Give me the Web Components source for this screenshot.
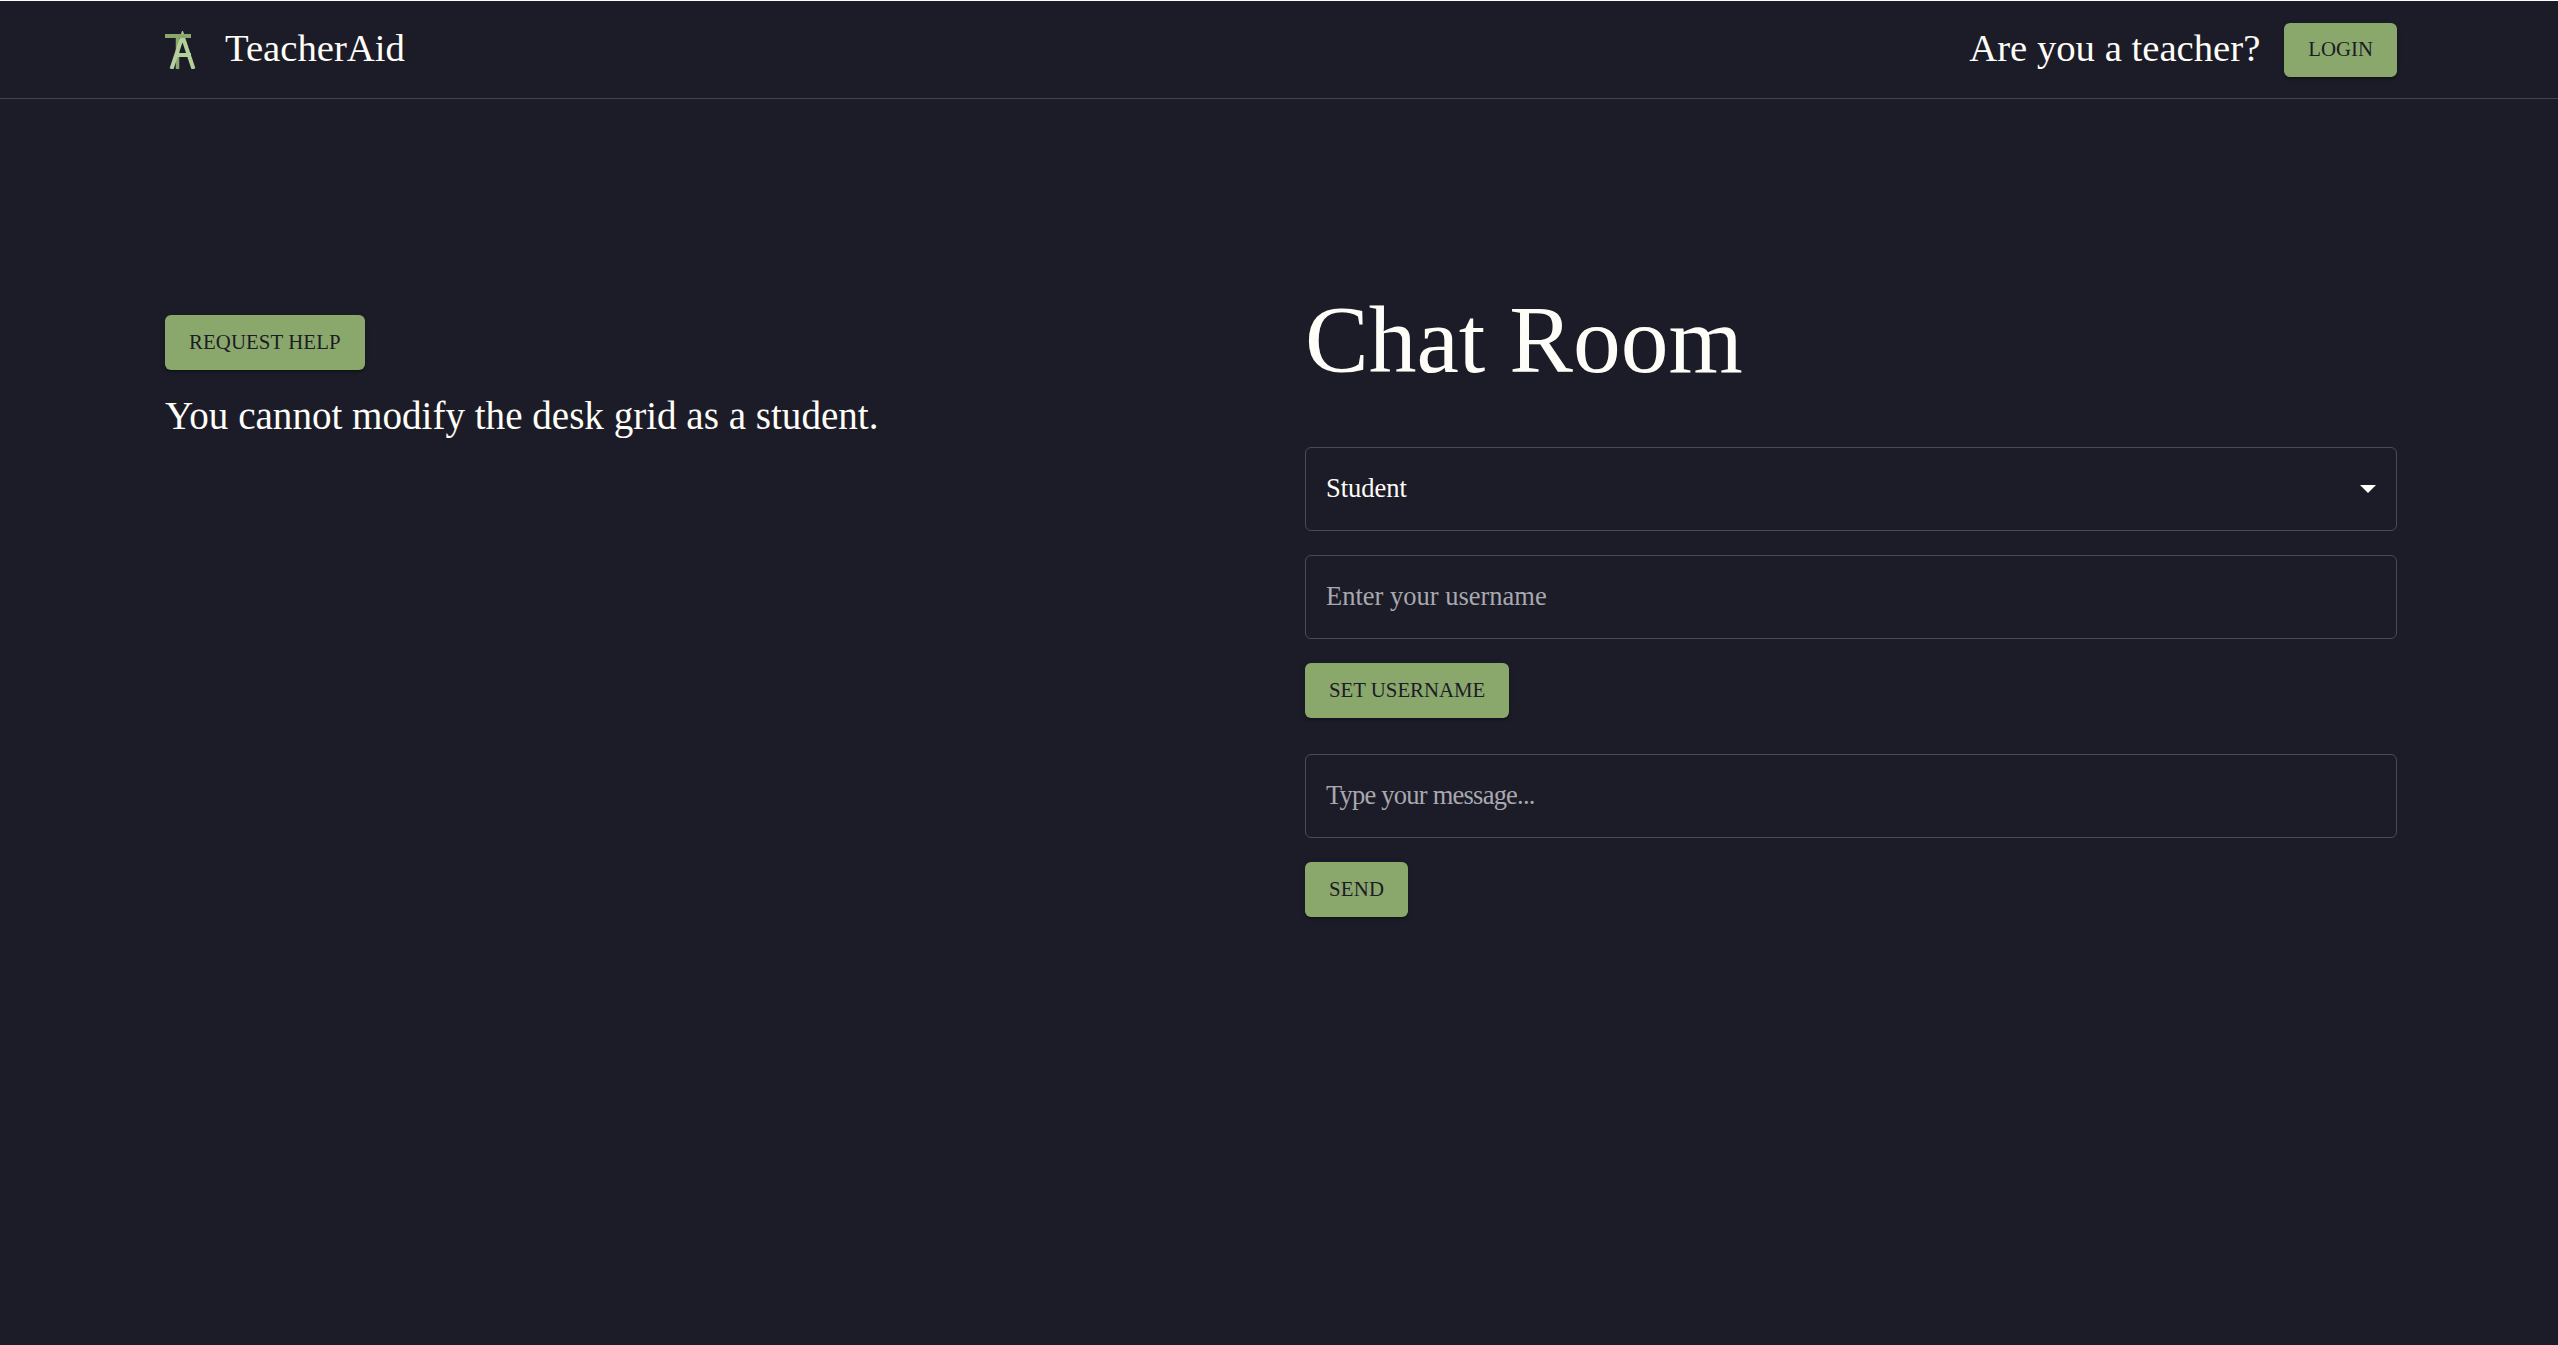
<!DOCTYPE html>
<html lang="en"><head><meta charset="utf-8"><title>TeacherAid</title>
<style>
html,body{margin:0;padding:0;background:#1c1c28;}
body{min-height:1345px;font-family:"Liberation Serif",serif;color:#fffdf7;}
</style></head><body>
<ta-header></ta-header>
<ta-main>
  <div slot="left">
    <ta-button style="letter-spacing:.1px">REQUEST HELP</ta-button>
    <ta-note>You cannot modify the desk grid as a student.</ta-note>
  </div>
  <div slot="right">
    <ta-title>Chat Room</ta-title>
    <ta-field select>Student</ta-field>
    <ta-field placeholder>Enter your username</ta-field>
    <ta-button>SET USERNAME</ta-button>
    <ta-field placeholder style="margin-top:36px;letter-spacing:-.77px">Type your message...</ta-field>
    <ta-button style="letter-spacing:.25px">SEND</ta-button>
  </div>
</ta-main>
<script>
function def(name,html){customElements.define(name,class extends HTMLElement{constructor(){super();const r=this.attachShadow({mode:'open'});r.innerHTML=html;}});}
def('ta-button',`<style>:host{display:block;width:max-content;margin-top:24px}
.b{box-sizing:border-box;height:var(--btn-h,55px);padding:0 24px;display:flex;align-items:center;background:#8ba86c;color:#1c1c28;border-radius:6px;font:20.8px "Liberation Serif",serif;box-shadow:0 3px 2px -2px rgba(0,0,0,.2),0 2px 2px rgba(0,0,0,.14),0 1px 5px rgba(0,0,0,.12)}
span{padding-bottom:2px}</style><div class="b"><span><slot></slot></span></div>`);
def('ta-note',`<style>:host{display:block;font:39.1px/52px "Liberation Serif",serif;color:#fffdf7;margin-top:20px}</style><slot></slot>`);
def('ta-title',`<style>:host{display:block;font:95.5px/50px "Liberation Serif",serif;color:#fffdf7;margin:0 0 82px;}</style><slot></slot>`);
def('ta-field',`<style>:host{display:block;margin-bottom:24px}
.f{box-sizing:border-box;height:84px;padding:0 20px;display:flex;align-items:center;justify-content:space-between;border:1px solid #4a4a55;border-radius:6px;font:26.5px "Liberation Serif",serif;color:#fffdf7}
:host([placeholder]) .f{color:#a8a8ae}
span{padding-bottom:2px}
svg{display:none}
:host([select]) svg{display:block}</style><div class="f"><span><slot></slot></span><svg width="16" height="8" viewBox="0 0 16 8"><path d="M0 0h16L8 8z" fill="#fff"/></svg></div>`);
def('ta-header',`<style>:host{display:block;border-top:1px solid #fff;border-bottom:1px solid #44444f;height:97px;box-sizing:content-box}
.w{height:97px;padding:0 161px 0 165px;display:flex;align-items:center;justify-content:space-between;font:38.7px "Liberation Serif",serif;color:#fffdf7}
.l,.r{display:flex;align-items:center}.l{gap:29px}.r{gap:24px}
span{padding-bottom:3px}
ta-button{margin:0;--btn-h:54px}
</style><div class="w"><div class="l"><svg width="31" height="38" viewBox="0 0 31 38"><path d="M12.500 5v33" stroke="#8ba86c" stroke-width="3.500" fill="none"/><path d="M6.500 38L17.500 5l11 33M11 24h15" stroke="#b5cf9b" stroke-width="4" fill="none"/><path d="M0 5h26" stroke="#8ba86c" stroke-width="4" fill="none"/></svg><span>TeacherAid</span></div><div class="r"><span>Are you a teacher?</span><ta-button>LOGIN</ta-button></div></div>`);
def('ta-main',`<style>:host{display:grid;grid-template-columns:1092px 1092px;gap:48px;padding:216px 161px 0 165px}
::slotted(*){min-width:0}</style><slot name="left"></slot><slot name="right"></slot>`);
</script>
<style>
ta-main ta-button:first-child{margin-top:0}
</style>
</body></html>
